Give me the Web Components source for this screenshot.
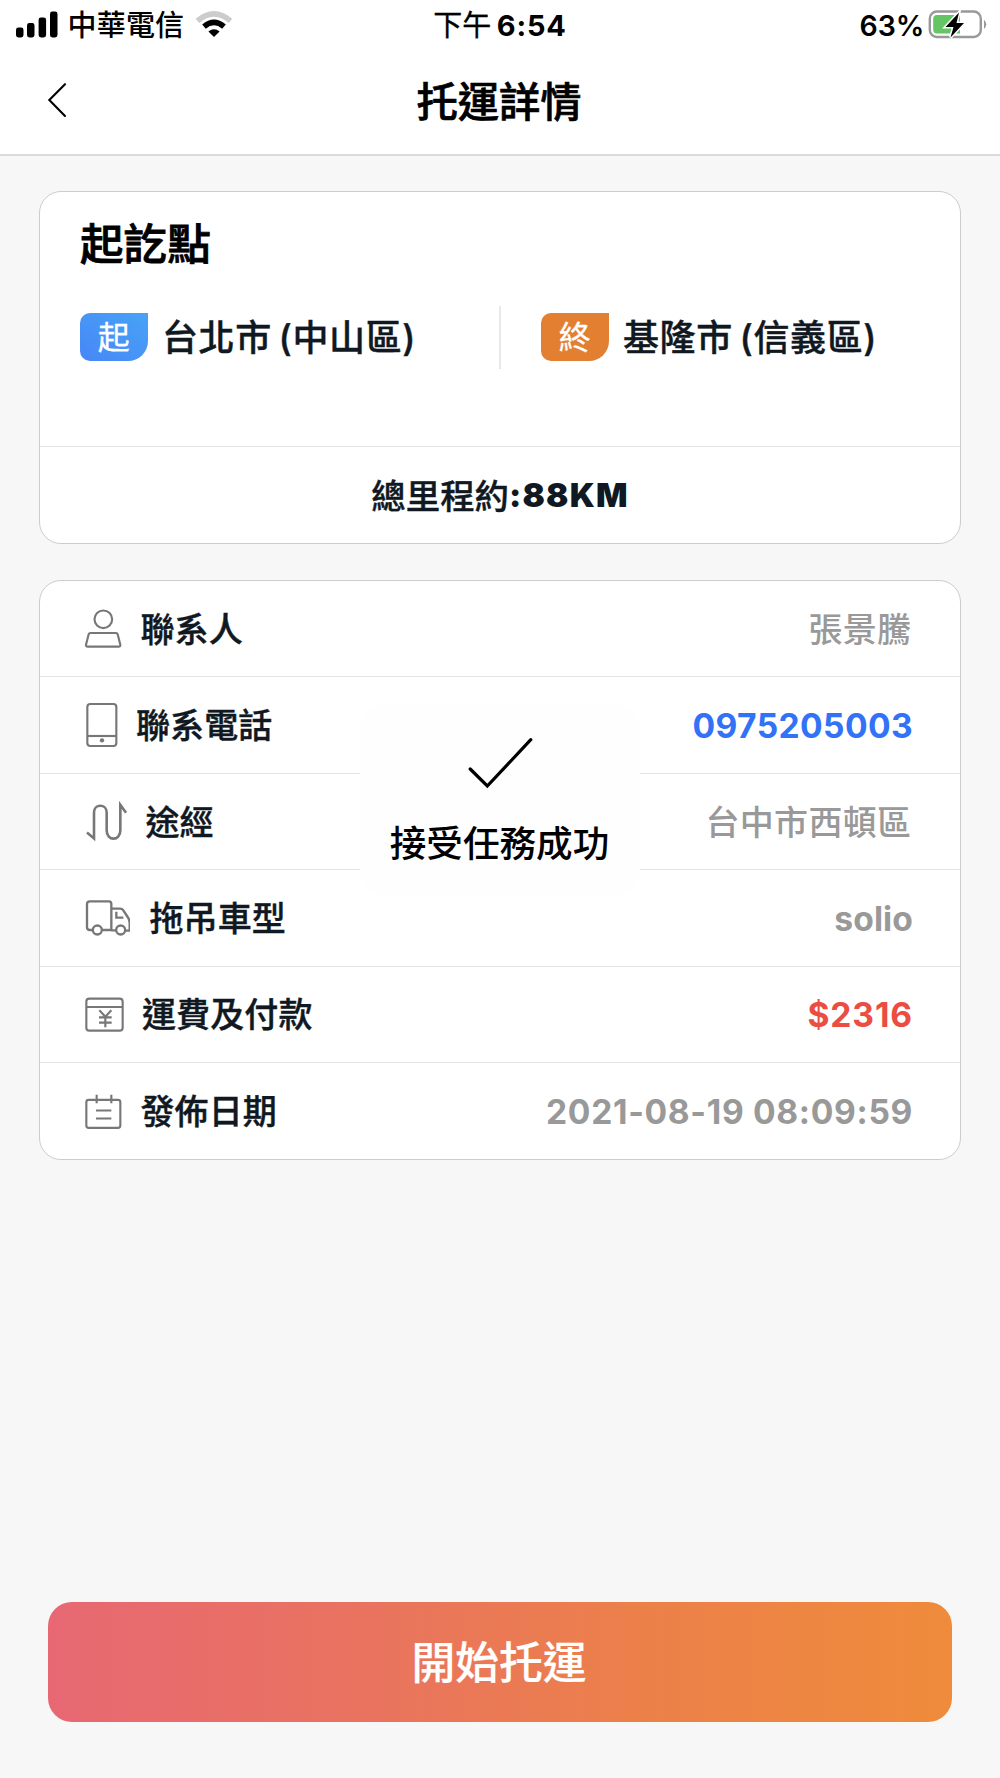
<!DOCTYPE html>
<html lang="zh-Hant">
<head>
<meta charset="utf-8">
<title>托運詳情</title>
<style>
  html, body { margin: 0; background: #f7f7f7; }
  body { font-family: Inter, "Noto Sans CJK TC", sans-serif; color: #101822; }
</style>
</head>
<body>
<consign-page></consign-page>
<script>
const define = (name, html) => {
  const tpl = document.createElement('template');
  tpl.innerHTML = html;
  customElements.define(name, class extends HTMLElement {
    constructor() {
      super();
      this.attachShadow({ mode: 'open' }).append(tpl.content.cloneNode(true));
    }
  });
};

define('status-bar', `
<style>
  :host { display: grid; grid-template-columns: 1fr auto 1fr; align-items: center; height: 50px; color: #000; font-size: 29px; line-height: 40px; white-space: nowrap; }
  .left, .right, .time { display: flex; align-items: center; }
  .left { padding-left: 16px; font-weight: 500; }
  span, b { padding-top: 2px; }
  .signal { width: 42px; height: 28px; margin-right: 9.5px; }
  .carrier { letter-spacing: .2px; }
  .wifi { width: 38px; height: 28px; margin-left: 10.5px; }
  .time { gap: 5.5px; font-weight: 400; -webkit-text-stroke: .3px; }
  .time b { font-weight: 700; letter-spacing: .8px; -webkit-text-stroke: 0; }
  .right { justify-content: flex-end; padding-right: 12px; font-size: 28.5px; font-weight: 600; }
  .battery { width: 60px; height: 30px; margin-left: 3.5px; }
  svg { display: block; }
</style>
<div class="left">
  <svg class="signal" viewBox="0 0 42 28"><g fill="#000"><rect x="0" y="16.5" width="7.5" height="10" rx="2.4"/><rect x="11" y="12" width="7.5" height="14.5" rx="2.4"/><rect x="22.6" y="6.5" width="7.5" height="20" rx="2.4"/><rect x="34" y=".5" width="7.5" height="26" rx="2.4"/></g></svg>
  <span class="carrier">中華電信</span>
  <svg class="wifi" viewBox="0 0 38 28"><path d="M2.5 9.8Q19 -4 35.5 9.8" fill="none" stroke="#ccc" stroke-width="5.6"/><path d="M9 15.6Q19 7.2 29 15.6" fill="none" stroke="#000" stroke-width="5.6"/><path d="M13.4 20.6Q19 16 24.6 20.6L19 26Z"/></svg>
</div>
<div class="time"><span>下午</span><b>6:54</b></div>
<div class="right"><span>63%</span>
  <svg class="battery" viewBox="0 0 60 30"><rect x="1.8" y="1.5" width="51" height="25.5" rx="7" fill="#fff" stroke="#999" stroke-width="2.4"/><path d="M9 5.1h23v18.5H9Q5.2 23.6 5.2 19.5V9.1Q5.2 5.1 9 5.1Z" fill="#65c466"/><path d="M56 9.7Q60.5 14.3 56 19.1Z" fill="#999"/><path d="M31 2.5 17.5 17H25.5L22.5 27.5 36 13H28.5Z" fill="#000" stroke="#fff" stroke-width="3" paint-order="stroke"/></svg>
</div>`);

define('nav-bar', `
<style>
  :host { display: grid; grid-template-columns: 100px 1fr 100px; align-items: center; box-sizing: border-box; height: 106px; border-bottom: 2px solid #dadada; color: #000; }
  svg { display: block; width: 20px; height: 36px; margin-left: 47px; margin-top: -4px; }
  h1 { margin: 0; padding-right: 2px; text-align: center; font-size: 41.3px; line-height: 60px; font-weight: 500; -webkit-text-stroke: .7px; }
</style>
<svg viewBox="0 0 20 36"><path d="M18 2.2 2.3 18 18 34" fill="none" stroke="#000" stroke-width="2.1" stroke-linecap="round"/></svg>
<h1><slot></slot></h1>`);

define('place-tag', `
<style>
  :host { display: flex; align-items: center; }
  .tag { width: 67.5px; height: 48px; margin-right: 14.5px; border-radius: 10px 0 20px 10px; background: var(--tag); color: #fff; font-size: 32px; line-height: 49px; text-align: center; -webkit-text-stroke: .3px; }
  .name { padding-top: 2px; font-size: 36px; letter-spacing: .62px; word-spacing: -3.5px; line-height: 48px; font-weight: 500; -webkit-text-stroke: .4px; white-space: pre; }
</style>
<div class="tag"><slot name="tag"></slot></div><div class="name"><slot></slot></div>`);

define('route-card', `
<style>
  :host { display: flex; flex-direction: column; box-sizing: border-box; height: 353px; border: 1px solid #ccc; border-radius: 22px; background: #fff; }
  h2 { margin: 25px 0 0 40px; color: #000; font-size: 43.6px; line-height: 56px; font-weight: 500; -webkit-text-stroke: .8px; }
  .places { display: flex; height: 63px; margin-top: 33px; padding-left: 40px; }
  .first { box-sizing: border-box; width: 421px; border-right: 2px solid #e8e8e8; margin-right: 40px; }
  place-tag { height: 61px; }
  .total { display: flex; align-items: center; justify-content: center; height: 96px; margin-top: auto; border-top: 1px solid #e2e2e2; font-size: 34.4px; font-weight: 500; -webkit-text-stroke: .4px; }
  .total span { padding-bottom: 3px; }
  .total b { font-size: 33px; font-weight: 900; letter-spacing: 1.2px; -webkit-text-stroke: 0; }
</style>
<h2>起訖點</h2>
<div class="places">
  <div class="first"><place-tag style="--tag:linear-gradient(35deg,#4787f6,#47a3f6)"><span slot="tag">起</span>台北市 (中山區)</place-tag></div>
  <place-tag style="--tag:#e37f31"><span slot="tag">終</span>基隆市 (信義區)</place-tag>
</div>
<div class="total"><span>總里程約</span><b>:88KM</b></div>`);

define('info-row', `
<style>
  :host { display: flex; align-items: center; flex: 1; padding: 0 48px 0 40px; border-top: 1px solid #e4e4e4; font-size: 34px; line-height: 48px; }
  :host(:first-of-type) { border-top: 0; }
  .icon { width: 50px; height: 50px; margin-right: var(--gap); }
  .label { flex: 1; padding-top: 2px; font-weight: 500; letter-spacing: .1px; -webkit-text-stroke: .4px; }
  .value { padding-top: 2px; color: var(--value, #999); font-weight: var(--weight, 500); font-size: var(--size, 34px); letter-spacing: var(--track, .3px); margin-right: var(--shift, .7px); }
</style>
<div class="icon"><slot name="icon"></slot></div>
<div class="label"><slot name="label"></slot></div>
<div class="value"><slot></slot></div>`);

define('info-card', `
<style>
  :host { display: flex; flex-direction: column; box-sizing: border-box; height: 579.5px; border: 1px solid #ccc; border-radius: 22px; background: #fff; }
  svg { display: block; width: 50px; height: 50px; fill: none; stroke: #777; stroke-width: 6.4; }
  .num { --weight: 650; --size: 33.6px; --shift: -1px; }
</style>
<info-row style="--gap:10.5px"><svg slot="icon" viewBox="30 40 150 150"><circle cx="100" cy="86" r="26.5"/><path d="M62 127h76q4 0 5 4l8 31q1 6-5 6H53q-6 0-5-6l8-31q1-4 6-4Z"/></svg><span slot="label">聯系人</span>張景騰</info-row>
<info-row class="num" style="--gap:6px;--value:#3272f6;--track:.38px"><svg slot="icon" viewBox="30 330 150 150"><rect x="52" y="342" width="87" height="126" rx="9"/><path d="M52 438h87"/><circle cx="96" cy="451" r="6.5" fill="#777" stroke="none"/></svg><span slot="label">聯系電話</span>0975205003</info-row>
<info-row style="--gap:15.5px"><svg slot="icon" viewBox="30 618.5 150 150"><path stroke-width="7.8" d="M51 725l21 18V665c0-27 38-27 38 0v53c0 34 41 34 41 0V642l17 24"/></svg><span slot="label">途經</span>台中市西頓區</info-row>
<info-row class="num" style="--gap:19.5px;--track:.1px"><svg slot="icon" viewBox="30 98 150 150"><g stroke-width="7"><path d="M68 209H58q-7-1-7-8v-70q0-8 8-8h58q7 0 7 8v78H95M124 145h26q7 0 10 5l13 20q6 8 6 17v24h-14M124 210h14M139 154v18h21"/><circle cx="82" cy="209" r="13.5"/><circle cx="152" cy="209" r="13.5"/></g></svg><span slot="label">拖吊車型</span>solio</info-row>
<info-row class="num" style="--gap:12px;--value:#eb4d43;--track:.9px"><svg slot="icon" viewBox="30 387 150 150"><rect x="49" y="416" width="109" height="96" rx="9"/><path d="M49 441h109M88 451l18 19 18-19M106 470v32M87 472h38M87 488h38"/></svg><span slot="label">運費及付款</span>$2316</info-row>
<info-row class="num" style="--gap:10.5px;--track:.67px"><svg slot="icon" viewBox="30 676.4 150 150"><rect x="49" y="718" width="102" height="84" rx="7"/><path d="M80 703v25M124 703v25M78 750h46M78 774h46"/></svg><span slot="label">發佈日期</span>2021-08-19 08:09:59</info-row>`);

define('success-toast', `
<style>
  :host { display: flex; flex-direction: column; align-items: center; box-sizing: border-box; width: 280px; height: 192px; padding-top: 33px; border-radius: 28px; background: #fefefe; color: #000; }
  svg { display: block; width: 66px; height: 52px; }
  .text { margin-top: 30px; padding-right: 1px; font-size: 36.6px; line-height: 50px; font-weight: 500; }
</style>
<svg viewBox="0 0 66 52"><path d="M3.2 32 20.3 49 63.8 2.7" fill="none" stroke="#000" stroke-width="3.2" stroke-linecap="round"/></svg>
<div class="text"><slot></slot></div>`);

define('start-button', `
<style>
  :host { display: block; }
  button { display: block; width: 100%; height: 120px; padding: 3px 2px 0 0; border: 0; border-radius: 24px; background: linear-gradient(90deg, #e76873, #e9735f 35%, #ec804a 65%, #ef8b3b); color: #fff; font: 500 43.8px/60px Inter, "Noto Sans CJK TC", sans-serif; -webkit-text-stroke: .2px; }
</style>
<button><slot></slot></button>`);

define('consign-page', `
<style>
  :host { display: flex; flex-direction: column; position: relative; width: 1000px; height: 1778px; background: #f7f7f7; overflow: hidden; }
  header { background: #fff; }
  main { display: flex; flex-direction: column; gap: 36px; padding: 35px 39px 0; }
  start-button { margin: auto 48.4px 56px; }
  success-toast { position: absolute; left: 360px; top: 704px; }
</style>
<header><status-bar></status-bar><nav-bar>托運詳情</nav-bar></header>
<main><route-card></route-card><info-card></info-card></main>
<start-button>開始托運</start-button>
<success-toast>接受任務成功</success-toast>`);
</script>
</body>
</html>
